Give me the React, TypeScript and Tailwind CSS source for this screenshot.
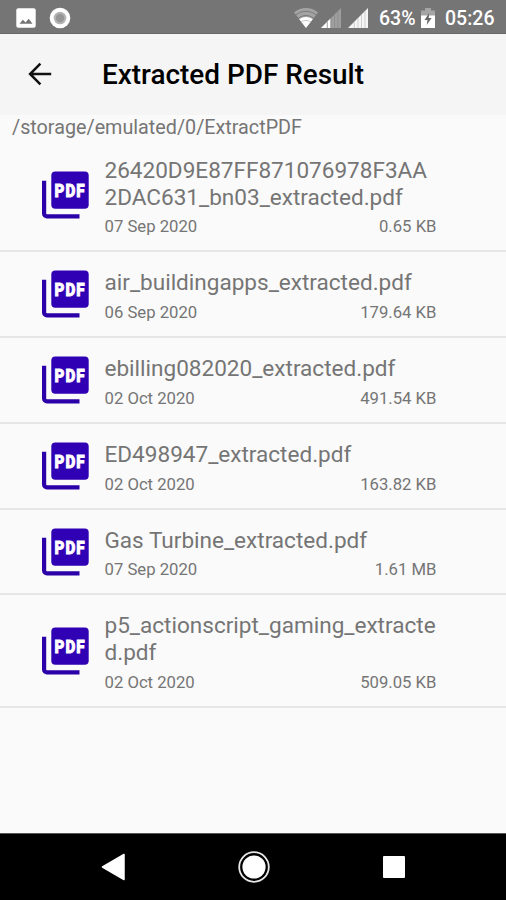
import React from 'react';

interface ExtractedFile {
  id: string;
  lines: string[];
  date: string;
  size: string;
}

const files: ExtractedFile[] = [
  { id: 'f-1', lines: ['26420D9E87FF871076978F3AA', '2DAC631_bn03_extracted.pdf'], date: '07 Sep 2020', size: '0.65 KB' },
  { id: 'f-2', lines: ['air_buildingapps_extracted.pdf'], date: '06 Sep 2020', size: '179.64 KB' },
  { id: 'f-3', lines: ['ebilling082020_extracted.pdf'], date: '02 Oct 2020', size: '491.54 KB' },
  { id: 'f-4', lines: ['ED498947_extracted.pdf'], date: '02 Oct 2020', size: '163.82 KB' },
  { id: 'f-5', lines: ['Gas Turbine_extracted.pdf'], date: '07 Sep 2020', size: '1.61 MB' },
  { id: 'f-6', lines: ['p5_actionscript_gaming_extracte', 'd.pdf'], date: '02 Oct 2020', size: '509.05 KB' }
];

function PdfIcon() {
  return (
    <svg width="48" height="48" viewBox="0 0 48 48" className="shrink-0">
      <path d="M3.1 9.8v32.7a2.9 2.9 0 0 0 2.9 2.9H38.5" fill="none" stroke="#2c00a8" strokeWidth="4.2" />
      <rect x="10.3" y="0.6" width="37.4" height="37.2" rx="4" fill="#3000b4" />
      <text
        transform="translate(13.5 26.3) scale(0.8 1)"
        letterSpacing="1.3"
        stroke="#fff"
        strokeWidth="0.9"
        className="fill-white font-[Roboto,sans-serif] text-[19px] font-black"
      >
        PDF
      </text>
    </svg>
  );
}

function SignalIcon({ weak }: { weak?: boolean }) {
  return (
    <svg width="20" height="20" viewBox="0 0 20 20">
      <path d="M0 20L20 0v20z" fill={weak ? '#9e9e9e' : '#f5f5f5'} />
      {weak && <path d="M0 20L9.5 10.5V20z" fill="#fff" />}
      <path d="M6.3 13.7v6.3M10 10v10M13.5 6.5v13.5M17 3v17" stroke={weak ? '#8a8a8a' : '#c4c4c4'} strokeWidth="0.8" />
    </svg>
  );
}

function StatusBar() {
  return (
    <div className="flex h-[34px] shrink-0 items-center border-b border-[#686868] bg-[#757575] pl-4 pr-[11px] pt-[2px] text-white">
      <svg width="20" height="20" viewBox="0 0 20 20">
        <rect x="0.3" y="0.3" width="19.4" height="19.4" rx="2" fill="#fff" />
        <path d="M3.5 15.8l3.4-4 2.6 2.8 3.2-3.9 3.8 5.1z" fill="#757575" />
      </svg>
      <svg width="22" height="22" viewBox="0 0 22 22" className="ml-[13px]">
        <circle cx="11" cy="11" r="10.3" fill="#fff" />
        <circle cx="11" cy="11" r="6.3" fill="#b4b4b4" />
        <circle cx="11" cy="11" r="4.2" fill="#969696" />
      </svg>
      <div className="ml-auto flex items-center">
        <svg width="24" height="20" viewBox="0 0 24 20">
          <path d="M0 4.5C7-1.4 17-1.4 24 4.5L12 20z" fill="#a3a3a3" />
          <path d="M1.8 7C8 2 16 2 22.2 7M4.4 10.2c4.8-3.6 10.4-3.6 15.2 0" fill="none" stroke="#757575" strokeWidth="0.9" />
          <path d="M5.3 11.3c4.2-3 9.2-3 13.4 0L12 20z" fill="#fff" />
          <path d="M7.2 14c3-2 6.6-2 9.6 0" fill="none" stroke="#b5b5b5" strokeWidth="0.8" />
        </svg>
        <div className="ml-[3px]"><SignalIcon weak /></div>
        <div className="ml-[7px]"><SignalIcon /></div>
        <span className="ml-[11px] w-[37px] whitespace-nowrap pt-[2px] text-[19.5px] font-medium leading-5">63%</span>
        <svg width="14" height="20" viewBox="0 0 14 20" className="ml-[5px]">
          <path d="M4 0h6v2.5h4V8H0V2.5h4z" fill="#a5a5a5" />
          <path d="M0 7.5h14V20H0z" fill="#fff" />
          <path d="M8.2 5L3.5 12h3l-.8 5L10.6 10H7.7z" fill="#666" />
        </svg>
        <span className="ml-[10px] w-[50px] whitespace-nowrap pt-[2px] text-[19.5px] font-medium leading-5">05:26</span>
      </div>
    </div>
  );
}

export default function App() {
  return (
    <div className="flex h-[900px] w-[506px] flex-col overflow-hidden bg-[#fafafa] font-[Roboto,sans-serif] text-[#757575]">
      <StatusBar />

      {/* Toolbar */}
      <header className="flex h-[81px] shrink-0 items-center bg-[#f5f5f5] pb-[2px] pl-[28px] text-black">
        <svg width="24" height="24" viewBox="0 0 24 24" fill="none" stroke="#111" strokeWidth="2.5">
          <path d="M23.2 12H2.5M12.4 1.7L2.1 12l10.3 10.3" />
        </svg>
        <h1 className="ml-[50px] pt-[2px] text-[27.9px] font-medium leading-8">Extracted PDF Result</h1>
      </header>

      <p className="h-[25px] shrink-0 pl-3 pt-px text-[19.75px] leading-6">/storage/emulated/0/ExtractPDF</p>

      {/* File list */}
      <main className="flex-1">
        {files.map((file) => (
          <div key={file.id} className="flex items-center border-b-2 border-[#e6e6e6] pl-[41px]">
            <PdfIcon />
            <div className="ml-[15.5px] w-[332px] pb-[13px] pt-[18px]">
              <div className="text-[22.55px] leading-[26.5px]">
                {file.lines.map((line) => (
                  <div key={line} className="whitespace-nowrap">{line}</div>
                ))}
              </div>
              <div className="mt-[6.3px] flex justify-between text-[16.7px] leading-5">
                <span>{file.date}</span>
                <span>{file.size}</span>
              </div>
            </div>
          </div>
        ))}
      </main>

      {/* Navigation bar */}
      <nav className="flex h-[67px] shrink-0 items-center justify-between border-t border-[#555] bg-black px-[101px]">
        <svg width="25" height="28" viewBox="0 0 25 28">
          <path d="M1.5 14L23 1.5v25z" fill="#fff" stroke="#fff" strokeWidth="1.5" strokeLinejoin="round" />
        </svg>
        <svg width="32" height="32" viewBox="0 0 32 32" className="-ml-[2px]">
          <circle cx="16" cy="16" r="14.8" fill="none" stroke="#e8e8e8" strokeWidth="1.8" />
          <circle cx="16" cy="16" r="11.6" fill="#fff" />
        </svg>
        <div className="h-[22px] w-[22px] rounded-[1px] bg-white" />
      </nav>
    </div>
  );
}
